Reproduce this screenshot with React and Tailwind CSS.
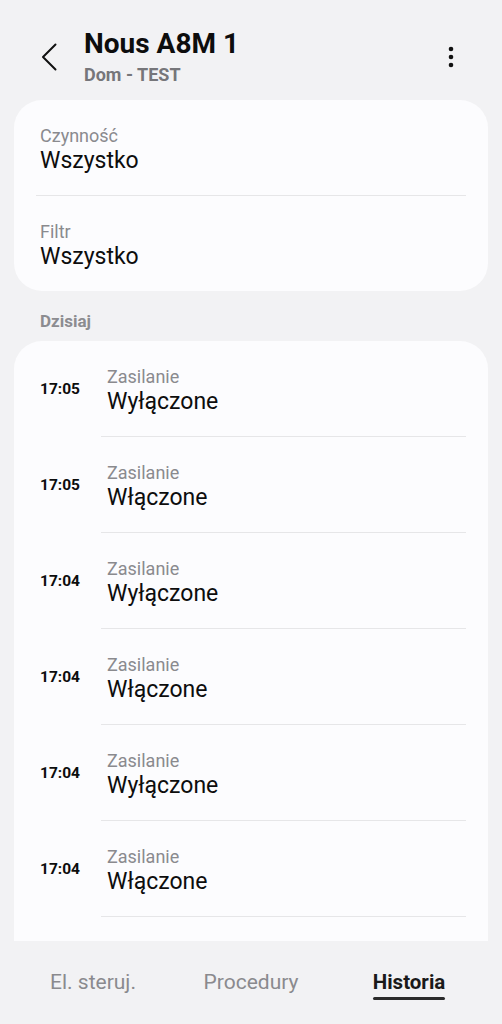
const filters = [
  { label: 'Czynność', value: 'Wszystko' },
  { label: 'Filtr', value: 'Wszystko' },
]

const events = [
  { time: '17:05', value: 'Wyłączone' },
  { time: '17:05', value: 'Włączone' },
  { time: '17:04', value: 'Wyłączone' },
  { time: '17:04', value: 'Włączone' },
  { time: '17:04', value: 'Wyłączone' },
  { time: '17:04', value: 'Włączone' },
]

const tabs = ['El. steruj.', 'Procedury', 'Historia']

function Header() {
  return (
    <header className="flex items-center shrink-0 pt-[28px] pb-[15px] pl-[41px] pr-[46px]">
      <svg width="16" height="28" viewBox="0 0 16 28" fill="none" className="shrink-0">
        <path d="M14.5 1.5 L2 14 L14.5 26.5" stroke="#111" strokeWidth="2" strokeLinecap="round" strokeLinejoin="round" />
      </svg>
      <div className="ml-[27px] flex-1 min-w-0">
        <h1 className="text-[28px] leading-[32px] font-bold text-[#0d0d0d]">Nous A8M 1</h1>
        <p className="mt-[5px] text-[18px] leading-[20px] font-bold text-[#76767a]">Dom - TEST</p>
      </div>
      <svg width="10" height="24" viewBox="0 0 10 24" className="shrink-0">
        <circle cx="5" cy="4" r="2.3" fill="#111" />
        <circle cx="5" cy="12" r="2.3" fill="#111" />
        <circle cx="5" cy="20" r="2.3" fill="#111" />
      </svg>
    </header>
  )
}

function FilterCard() {
  return (
    <div className="bg-[#fcfcfe] rounded-[28px]">
      {filters.map((f, i) => (
        <div
          key={f.label}
          className={`mx-[22px] pl-[4px] pt-[26px] pb-[21px] ${i < filters.length - 1 ? 'border-b border-[#e6e6e8]' : ''}`}
        >
          <p className="text-[18px] leading-[20px] text-[#8a8a8e]">{f.label}</p>
          <p className="mt-[2px] text-[23px] leading-[26px] text-[#0d0d0d]">{f.value}</p>
        </div>
      ))}
    </div>
  )
}

function HistoryList() {
  return (
    <div className="bg-[#fcfcfe] rounded-t-[28px] pb-[40px]">
      {events.map((e, i) => (
        <div key={i} className="flex items-center">
          <span className="w-[87px] shrink-0 pl-[26px] text-[15.5px] leading-[20px] font-bold text-[#0d0d0d]">{e.time}</span>
          <div className="flex-1 min-w-0 mr-[22px] pl-[6px] pt-[26px] pb-[21px] border-b border-[#e6e6e8]">
            <p className="text-[18px] leading-[20px] text-[#8a8a8e]">Zasilanie</p>
            <p className="mt-[2px] text-[23px] leading-[26px] text-[#0d0d0d]">{e.value}</p>
          </div>
        </div>
      ))}
    </div>
  )
}

function BottomTabs() {
  return (
    <nav className="shrink-0 h-[83px] grid grid-cols-3 px-[14px] pt-[29px]">
      {tabs.map((t, i) => {
        const active = i === tabs.length - 1
        return (
          <div key={t} className="flex justify-center">
            <div className="flex flex-col items-stretch">
              <span
                className={`leading-[24px] ${active ? 'text-[20.5px] font-bold text-[#1a1a1a]' : 'text-[21px] text-[#8a8a8e]'}`}
              >
                {t}
              </span>
              {active ? <span className="mt-[3px] h-[3px] rounded-full bg-[#2b2b2b]" /> : null}
            </div>
          </div>
        )
      })}
    </nav>
  )
}

export default function App() {
  return (
    <div className="h-screen flex flex-col overflow-hidden bg-[#f2f2f4] font-['Roboto',sans-serif]">
      <Header />
      <main className="flex-1 min-h-0 overflow-hidden px-[14px]">
        <FilterCard />
        <h2 className="pt-[20px] pb-[10px] px-[26px] text-[17px] leading-[20px] font-bold text-[#8c8c90]">Dzisiaj</h2>
        <HistoryList />
      </main>
      <BottomTabs />
    </div>
  )
}
